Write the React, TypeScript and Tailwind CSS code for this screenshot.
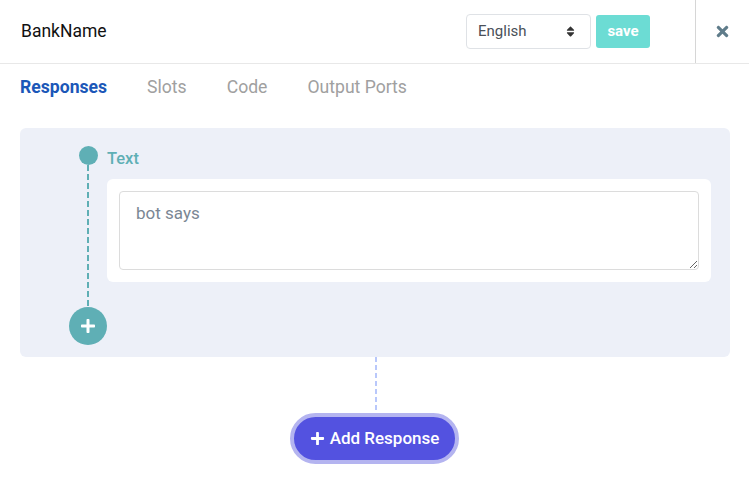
import { FaPlus, FaSort, FaTimes } from "react-icons/fa";

export default function App() {
    return (
        <div className="min-h-screen w-full bg-white font-['Roboto',sans-serif] text-black">
            {/* Header */}
            <div className="flex h-[64px] items-center border-b border-[#e8e8e8]">
                <div className="flex-1 pl-[21px] text-[17.5px] text-[#111]">BankName</div>
                <div className="flex h-[35px] w-[125px] items-center justify-between rounded border border-[#dfe2e6] pl-[11px] pr-[13px] text-[15px] text-[#4a5058]">
                    <span>English</span>
                    <FaSort className="h-[13px] w-[13px] text-[#333]" />
                </div>
                <button className="ml-[5px] h-[33px] w-[54px] rounded-[3px] bg-[#6cdcd4] text-[15px] font-bold text-white">
                    save
                </button>
                <div className="ml-[45px] flex h-full w-[54px] items-center justify-center border-l border-[#d6d6d6]">
                    <FaTimes className="h-[17px] w-[17px] text-[#5f7c8a]" />
                </div>
            </div>

            {/* Tabs */}
            <div className="flex h-[47px] items-center gap-10 pl-5 text-[17.6px] text-[#a0a0a0]">
                <span className="font-bold text-[#1b57b8]">Responses</span>
                <span>Slots</span>
                <span>Code</span>
                <span>Output Ports</span>
            </div>

            {/* Responses panel */}
            <div className="ml-5 mr-[19px] mt-[17px] rounded-md bg-[#edf0f8] pb-3 pl-[49px] pr-[19px] pt-[18px]">
                <div className="flex">
                    <div className="flex w-[38px] flex-col items-center">
                        <div className="h-[19px] w-[19px] rounded-full bg-[#5fafb5]" />
                        <svg width="2" height="142" className="block">
                            <line x1="1" y1="0" x2="1" y2="142" stroke="#5fafb5" strokeWidth="2" strokeDasharray="6 3" />
                        </svg>
                        <div className="flex h-[38px] w-[38px] items-center justify-center rounded-full bg-[#5fafb5]">
                            <FaPlus className="h-[16px] w-[16px] text-white" />
                        </div>
                    </div>
                    <div className="flex-1">
                        <div className="h-[24px] pt-[1px] text-[16.5px] font-medium leading-6 text-[#5fafb5]">Text</div>
                        <div className="mt-[9px] rounded-md bg-white p-3">
                            <textarea
                                placeholder="bot says"
                                className="block h-[79px] w-full rounded border border-[#dcdcdc] px-4 py-[9px] text-[17px] leading-6 text-[#333] outline-none placeholder:text-[#7a8794]"
                            />
                        </div>
                    </div>
                </div>
            </div>

            {/* Add response */}
            <div className="flex flex-col items-center">
                <svg width="2" height="56" className="ml-[3px] block">
                    <line x1="1" y1="0" x2="1" y2="56" stroke="#b9c8fb" strokeWidth="2" strokeDasharray="5 3" />
                </svg>
                <button className="flex h-[51px] w-[169px] items-center justify-center gap-[5px] rounded-full border-4 border-[#b4b4f0] bg-[#5352e0] text-[17px] font-medium text-white">
                    <FaPlus className="h-[15px] w-[15px]" />
                    Add Response
                </button>
            </div>
        </div>
    );
}
